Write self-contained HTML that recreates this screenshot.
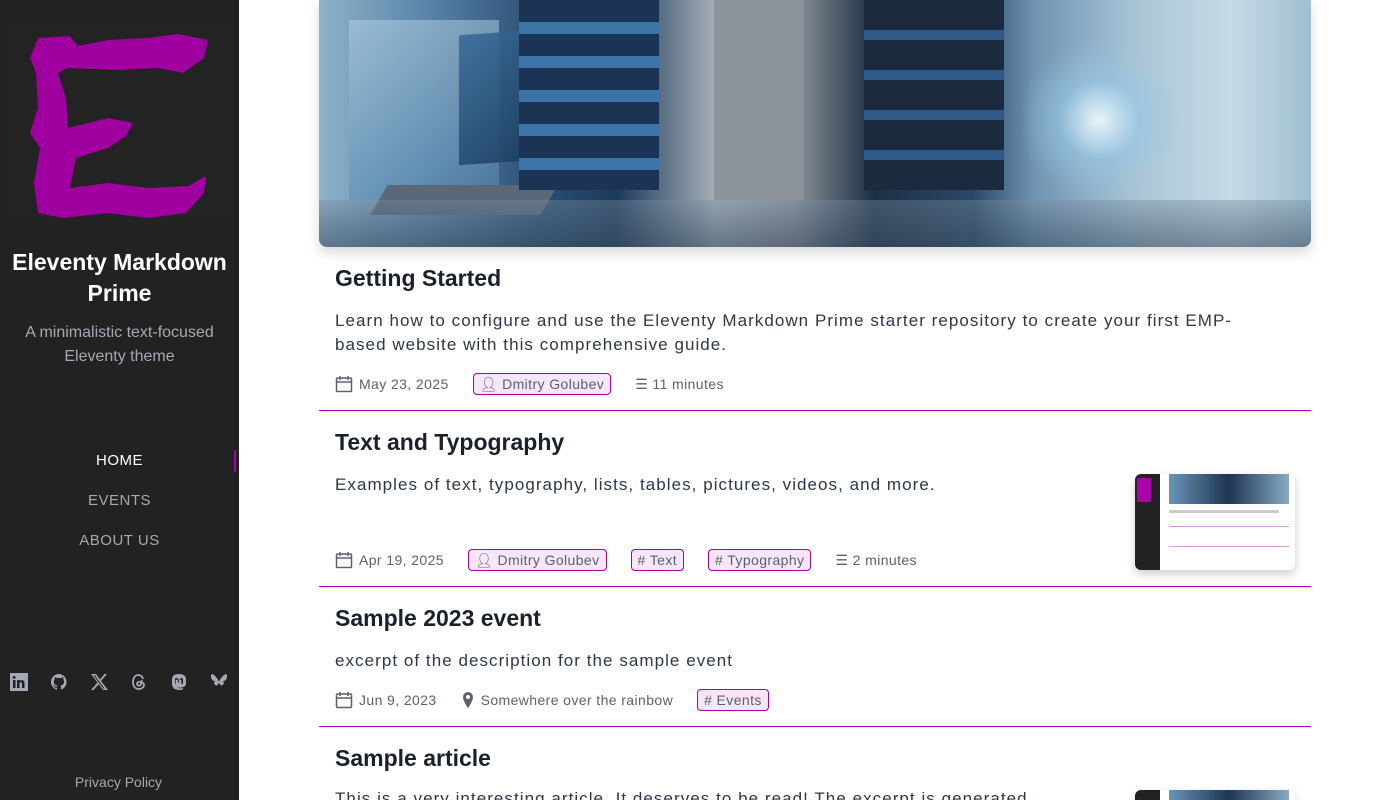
<!DOCTYPE html>
<html style="width:1400px;height:800px;overflow:hidden"><head><meta charset="utf-8"><style>
*{box-sizing:border-box;margin:0;padding:0}
body{width:1400px;height:800px;overflow:hidden;background:#fff;font-family:"Liberation Sans",sans-serif;position:relative}
.side{position:absolute;left:0;top:0;width:239px;height:800px;background:#222}
.logo{position:absolute;left:8px;top:18px;width:224px;height:204px;background:#232323}
.st{position:absolute;left:0;width:239px;text-align:center;color:#fff;font-weight:bold;font-size:23px;line-height:31px;top:247px}
.sub{position:absolute;left:0;width:239px;text-align:center;color:#a3a8b3;font-size:16px;line-height:24px;top:321px}
.nav{position:absolute;left:0;width:239px;text-align:center;font-size:15px;color:#a3a8b3;letter-spacing:.5px}
.soc{position:absolute;top:673px;left:0;width:239px}
.soc svg{position:absolute;top:0;width:18px;height:18px;fill:#a3a8b3}
.pp{position:absolute;top:774px;left:0;width:237px;text-align:center;color:#a3a8b3;font-size:14px}
.hero{position:absolute;left:319px;top:0;width:992px;height:247px;border-radius:0 0 8px 8px;overflow:hidden;box-shadow:0 6px 12px rgba(0,0,0,.15);
background:linear-gradient(90deg,#8fb2c9 0%,#5d88ab 10%,#2b4f74 22%,#1c3a5a 30%,#a7b0b9 40%,#8a9098 48%,#1d2f45 56%,#2a4966 66%,#6f93b1 72%,#a8c4d6 82%,#c7dbe6 92%,#9fbfd2 100%)}
.t{position:absolute;left:335px;font-size:23px;font-weight:bold;color:#1a202c}
.e{position:absolute;left:335px;width:940px;font-size:17px;line-height:24px;color:#2d3748;letter-spacing:1.05px}
.m{position:absolute;left:335px;font-size:14px;color:#5a6170;height:22px;display:flex;align-items:center;letter-spacing:.4px}
.m span{display:inline-flex;align-items:center;gap:6px}
.tag{border:1px solid #a0a;background:#f7e6f7;border-radius:4px;padding:0 6px;height:22px}
.hr{position:absolute;left:319px;width:992px;height:1px;background:#a0a}
.th{position:absolute;left:1135px;width:160px;height:96px;border-radius:6px;overflow:hidden;box-shadow:0 4px 10px rgba(0,0,0,.2);background:#fff}
</style></head><body>
<div class="side">
 <div class="logo"><svg width="224" height="204" viewBox="0 0 224 204"><path fill="#a000a0" d="M30 20 L62 18 L70 28 L100 22 L140 20 L170 16 L200 22 L196 40 L175 55 L150 50 L110 52 L60 50 L50 55 L58 80 L60 110 L100 100 L125 105 L118 118 L100 130 L68 140 L62 170 L100 165 L140 170 L180 168 L198 158 L196 175 L178 195 L140 200 L100 195 L55 200 L30 195 L26 165 L32 130 L22 115 L30 90 L28 55 L22 40 Z"/></svg></div>
 <div class="st">Eleventy Markdown<br>Prime</div>
 <div class="sub">A minimalistic text-focused<br>Eleventy theme</div>
 <div class="nav" style="top:452px;color:#fff">HOME</div>
 <div style="position:absolute;left:234px;top:450px;width:2px;height:22px;background:#a0a"></div>
 <div class="nav" style="top:492px">EVENTS</div>
 <div class="nav" style="top:532px">ABOUT US</div>
 <div class="soc">
  <svg style="left:10px" viewBox="0 0 18 18"><path d="M0 0h18v18H0z M3 7v8h2.5V7z M4.2 3a1.4 1.4 0 100 2.8 1.4 1.4 0 000-2.8z M7 7v8h2.5v-4.5c0-1.5 2.5-1.7 2.5 0V15h2.5v-5c0-3.5-3.8-3.5-5-1.8V7z" fill-rule="evenodd"/></svg>
  <svg style="left:50px" viewBox="0 0 18 18"><path d="M9 1a8 8 0 00-2.5 15.6c.4 0 .5-.2.5-.4v-1.4c-2.2.5-2.7-1-2.7-1-.4-.9-.9-1.2-.9-1.2-.7-.5.1-.5.1-.5.8.1 1.2.8 1.2.8.7 1.2 1.9.9 2.3.7.1-.5.3-.9.5-1.1-1.8-.2-3.6-.9-3.6-4 0-.9.3-1.6.8-2.1-.1-.2-.4-1 .1-2.1 0 0 .7-.2 2.2.8a7.600 7.600 0 014 0c1.5-1 2.2-.8 2.2-.8.4 1.1.2 1.900.1 2.1.5.6.8 1.300.8 2.100 0 3.1-1.900 3.800-3.600 4 .3.200.5.700.5 1.400v2.100c0 .2.100.500.600.400A8 8 0 009 1z"/></svg>
  <svg style="left:90px" viewBox="0 0 18 18"><path d="M1 1h5l4 5.5L14.5 1H17l-6 7 7 9h-5l-4.3-5.800L3.500 17H1l6.500-7.500z M3.500 2.300l9.800 13.400h1.300L4.800 2.300z" fill-rule="evenodd"/></svg>
  <svg style="left:130px" viewBox="0 0 18 18"><path fill="none" stroke="#a3a8b3" stroke-width="1.8" d="M13 6c-.5-2.500-2.500-4-4.500-4C5 2 3 5 3 9s2 7 6 7c3 0 5-2 5-4s-2-3-4.500-3S7 10 7 11s1 1.800 2.500 1.500S12 10 11.500 7"/></svg>
  <svg style="left:170px" viewBox="0 0 18 18"><path d="M9 1C4 1 2 3 2 7v4c0 5 4 6 8 6l3-.5v-1.500s-4 1-6-.5c4 .5 9 0 9-4V7c0-4-2-6-7-6zM5 6.500c0-2 2.500-2 3.500 0L9 7.500l.5-1c1-2 3.500-2 3.500 0V11h-1.700V7.500c0-1.300-2.300-1.300-2.300.5V9.500H8V8c0-1.800-2.300-1.800-2.300-.5V11H5z" fill-rule="evenodd"/></svg>
  <svg style="left:210px" viewBox="0 0 18 18"><path d="M4 2c2 1.500 4 4.500 5 6.500 1-2 3-5 5-6.500 1.500-1 3-1.500 3 .5 0 1 0 3-1 4-.8 1.500-3 1.800-4 1.500 2 .5 2.500 2 1.200 3.500-2.500 2.500-3.500-.5-4.200-2-.7 1.500-1.700 4.500-4.200 2C3.500 10 4 8.500 6 8 5 8.300 2.800 8 2 6.500 1 5.500 1 3.500 1 2.500 1 .5 2.500 1 4 2z"/></svg>
 </div>
 <div class="pp">Privacy Policy</div>
</div>

<div class="hero">
 <div style="position:absolute;left:30px;top:20px;width:150px;height:180px;background:linear-gradient(180deg,rgba(180,210,230,.5),rgba(90,140,180,.5))"></div>
 <div style="position:absolute;left:140px;top:30px;width:150px;height:130px;background:linear-gradient(135deg,#3a6d9a,#0f2a48);transform:skewY(-4deg);opacity:.9"></div>
 <div style="position:absolute;left:60px;top:185px;width:170px;height:30px;background:#5a6878;transform:skewX(-30deg)"></div>
 <div style="position:absolute;left:200px;top:0;width:140px;height:190px;background:repeating-linear-gradient(180deg,#1b3455 0 22px,#3d74a8 22px 34px)"></div>
 <div style="position:absolute;left:395px;top:0;width:90px;height:200px;background:#8b929a"></div>
 <div style="position:absolute;left:545px;top:0;width:140px;height:190px;background:repeating-linear-gradient(180deg,#1b2a3f 0 30px,#2e5a8a 30px 40px)"></div>
 <div style="position:absolute;left:0;top:200px;width:992px;height:47px;background:linear-gradient(180deg,rgba(120,140,160,.4),rgba(60,80,100,.6))"></div>
 <div style="position:absolute;left:700px;top:40px;width:160px;height:160px;border-radius:50%;background:radial-gradient(circle,#e6f4fb 0%,rgba(150,200,230,.6) 35%,rgba(0,0,0,0) 70%)"></div>
</div>

<div class="t" style="top:265px">Getting Started</div>
<div class="e" style="top:309px">Learn how to configure and use the Eleventy Markdown Prime starter repository to create your first EMP-based website with this comprehensive guide.</div>
<div class="m" style="top:373px"><span>
<svg width="18" height="18" viewBox="0 0 18 18" fill="none" stroke="#5a6170" stroke-width="1.5"><rect x="1.500" y="3" width="15" height="13.500" rx="1"/><path d="M1.500 7h15M5 1v4M13 1v4"/></svg>May 23, 2025</span>
<span class="tag" style="margin-left:24px">👤︎ Dmitry Golubev</span>
<span style="margin-left:24px">☰ 11 minutes</span></div>
<div class="hr" style="top:410px"></div>

<div class="t" style="top:429px">Text and Typography</div>
<div class="e" style="top:473px">Examples of text, typography, lists, tables, pictures, videos, and more.</div>
<div class="m" style="top:549px"><span>
<svg width="18" height="18" viewBox="0 0 18 18" fill="none" stroke="#5a6170" stroke-width="1.5"><rect x="1.500" y="3" width="15" height="13.500" rx="1"/><path d="M1.500 7h15M5 1v4M13 1v4"/></svg>Apr 19, 2025</span>
<span class="tag" style="margin-left:24px">👤︎ Dmitry Golubev</span>
<span class="tag" style="margin-left:24px"># Text</span>
<span class="tag" style="margin-left:24px"># Typography</span>
<span style="margin-left:24px">☰ 2 minutes</span></div>
<div class="th" style="top:474px"><div style="position:absolute;left:0;top:0;width:25px;height:96px;background:#222"></div><div style="position:absolute;left:2px;top:4px;width:14px;height:24px;background:#a0a"></div><div style="position:absolute;left:34px;top:0;width:120px;height:30px;background:linear-gradient(90deg,#6a94b6,#1e3553,#88aac2)"></div><div style="position:absolute;left:34px;top:36px;width:110px;height:3px;background:#ccc"></div><div style="position:absolute;left:34px;top:52px;width:120px;height:1px;background:#d9d"></div><div style="position:absolute;left:34px;top:72px;width:120px;height:1px;background:#d9d"></div></div>
<div class="hr" style="top:586px"></div>

<div class="t" style="top:605px">Sample 2023 event</div>
<div class="e" style="top:649px">excerpt of the description for the sample event</div>
<div class="m" style="top:689px"><span>
<svg width="18" height="18" viewBox="0 0 18 18" fill="none" stroke="#5a6170" stroke-width="1.5"><rect x="1.500" y="3" width="15" height="13.500" rx="1"/><path d="M1.500 7h15M5 1v4M13 1v4"/></svg>Jun 9, 2023</span>
<span style="margin-left:24px"><svg width="14" height="18" viewBox="0 0 14 18"><path fill="#5a6170" d="M7 1a5 5 0 00-5 5c0 4 5 11 5 11s5-7 5-11a5 5 0 00-5-5zm0 3a2 2 0 110 4 2 2 0 010-4z"/></svg>Somewhere over the rainbow</span>
<span class="tag" style="margin-left:24px"># Events</span></div>
<div class="hr" style="top:726px"></div>

<div class="t" style="top:745px">Sample article</div>
<div class="e" style="top:787px">This is a very interesting article. It deserves to be read! The excerpt is generated</div>
<div class="th" style="top:790px"><div style="position:absolute;left:0;top:0;width:25px;height:96px;background:#222"></div><div style="position:absolute;left:34px;top:0;width:120px;height:30px;background:linear-gradient(90deg,#6a94b6,#1e3553,#88aac2)"></div></div>
</body></html>
